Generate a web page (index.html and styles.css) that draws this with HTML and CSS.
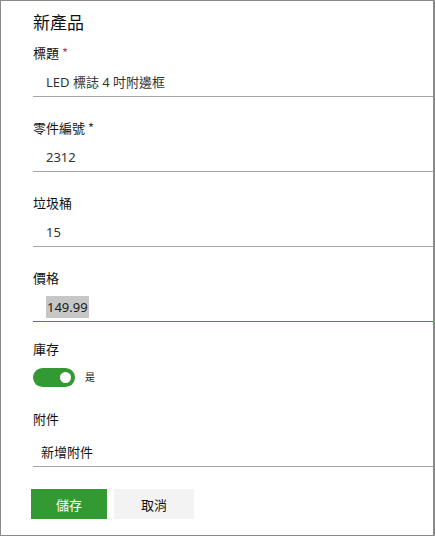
FILE: index.html
```html
<!DOCTYPE html>
<html lang="zh-Hant">
<head>
<meta charset="utf-8">
<title>新產品</title>
<link rel="stylesheet" href="styles.css">
</head>
<body>
<div class="form">
  <div class="heading">新產品</div>

  <div class="field">
    <div class="label">標題 <span class="req req-a">*</span></div>
    <div class="input">LED 標誌 4 吋附邊框</div>
  </div>

  <div class="field">
    <div class="label">零件編號 <span class="req">*</span></div>
    <div class="input">2312</div>
  </div>

  <div class="field">
    <div class="label">垃圾桶</div>
    <div class="input">15</div>
  </div>

  <div class="field">
    <div class="label">價格</div>
    <div class="input input-active"><span class="selected">149.99</span></div>
  </div>

  <div class="field field-stock">
    <div class="label">庫存</div>
    <div class="toggle-row">
      <span class="toggle"><span class="knob"></span></span>
      <span class="toggle-text">是</span>
    </div>
  </div>

  <div class="field field-attach">
    <div class="label">附件</div>
    <div class="input input-attach">新增附件</div>
  </div>

  <div class="buttons">
    <button class="btn btn-save">儲存</button>
    <button class="btn btn-cancel">取消</button>
  </div>
</div>
</body>
</html>
```

FILE: styles.css
```css
html, body {
  margin: 0;
  padding: 0;
  background: #ffffff;
}

body {
  font-family: "Noto Sans", "Noto Sans CJK TC", sans-serif;
  color: #111111;
}

.form {
  box-sizing: border-box;
  width: 435px;
  height: 536px;
  border: 1px solid #8a8a8a;
  border-right-width: 2px;
  padding-left: 32px;
  overflow: hidden;
}

.heading {
  font-family: "Noto Sans CJK TC", sans-serif;
  font-size: 17px;
  line-height: 24px;
  padding-top: 9px;
  margin-bottom: 9px;
  color: #111111;
}

.field {
  margin-bottom: 21px;
}

.label {
  font-family: "Noto Sans CJK TC", sans-serif;
  font-size: 13px;
  line-height: 20px;
  color: #111111;
}

.req {
  color: #333333;
}

.req-a {
  color: #9a4a6a;
}

.input {
  font-family: "Noto Sans", "Noto Sans CJK TC", sans-serif;
  font-size: 13px;
  line-height: 22px;
  padding: 8px 0 3px 13px;
  border-bottom: 1px solid #a6a6a6;
  color: #333333;
}

.input-active {
  border-bottom-color: #339933;
}

.selected {
  background: #c6c6c6;
  color: #1a1a1a;
  padding: 2px 1px;
}

.field-stock {
  margin-top: -4px;
  margin-bottom: 22px;
}

.toggle-row {
  display: flex;
  align-items: center;
  gap: 10px;
  margin-top: 8px;
  height: 20px;
}

.toggle {
  display: flex;
  align-items: center;
  justify-content: flex-end;
  box-sizing: border-box;
  width: 42px;
  height: 19px;
  border-radius: 10px;
  background: #339933;
  padding-right: 4px;
}

.knob {
  width: 11px;
  height: 11px;
  border-radius: 50%;
  background: #ffffff;
}

.toggle-text {
  font-family: "Noto Sans CJK TC", sans-serif;
  font-size: 10px;
  line-height: 14px;
  color: #111111;
}

.field-attach {
  margin-bottom: 22px;
}

.input-attach {
  font-family: "Noto Sans CJK TC", sans-serif;
  padding: 12px 0 3px 8px;
  color: #111111;
}

.buttons {
  display: flex;
  gap: 7px;
  margin-left: -2px;
}

.btn {
  border: none;
  height: 30px;
  font-family: "Noto Sans CJK TC", sans-serif;
  font-size: 13px;
  padding: 0;
  cursor: pointer;
}

.btn-save {
  width: 76px;
  background: #339933;
  color: #ffffff;
}

.btn-cancel {
  width: 80px;
  background: #f3f3f3;
  color: #111111;
}
```
